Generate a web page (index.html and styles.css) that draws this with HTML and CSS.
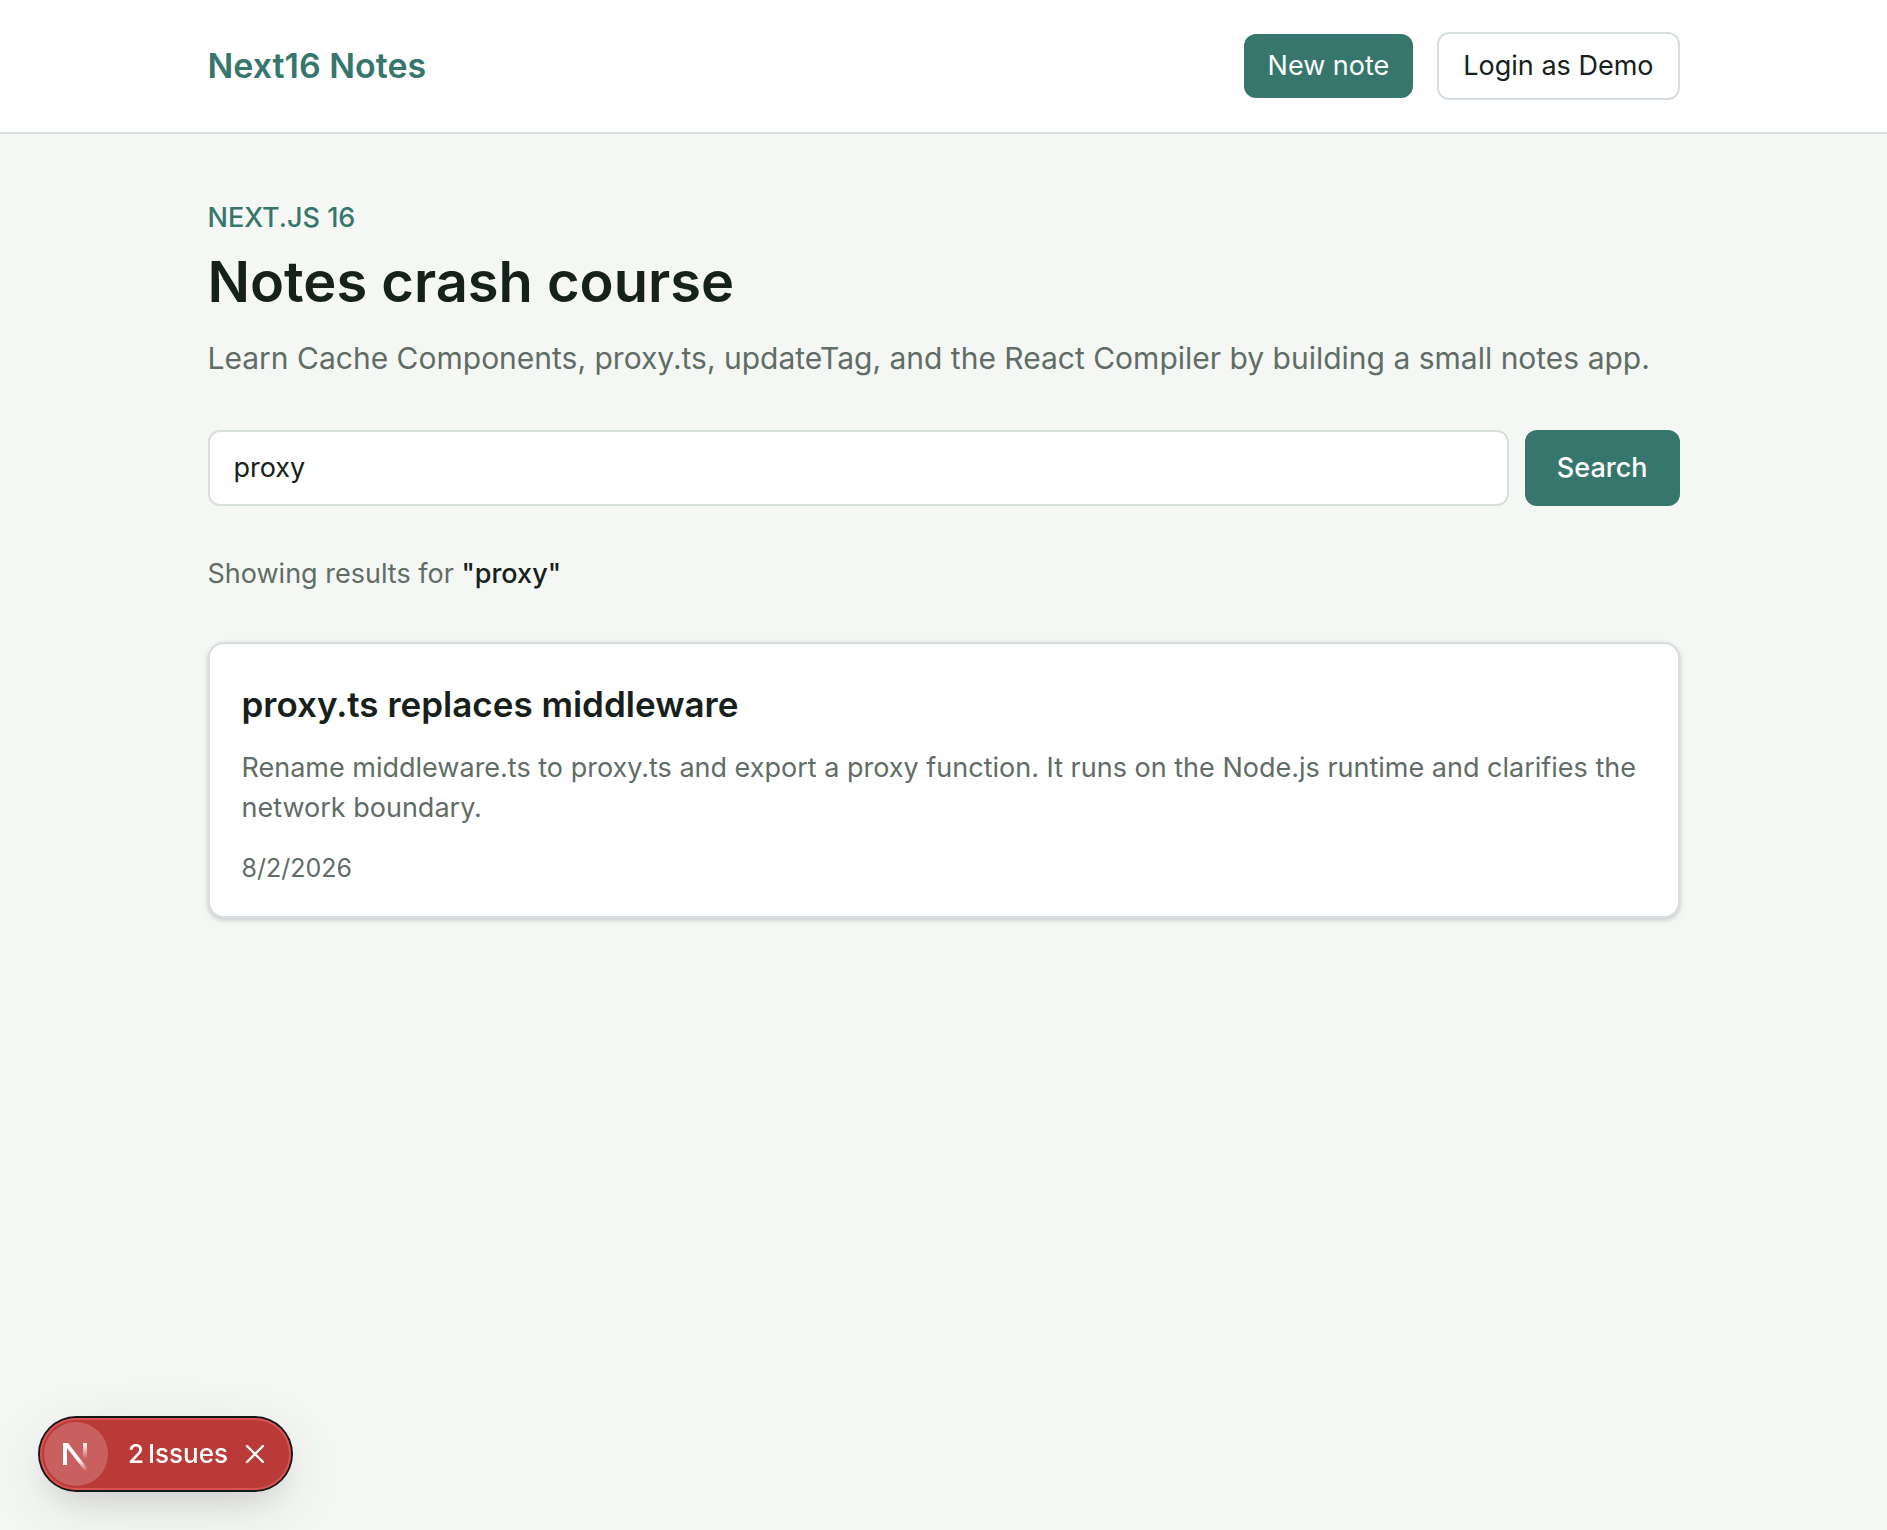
FILE: index.html
```html
<!DOCTYPE html>
<html lang="en">
<head>
  <meta charset="UTF-8">
  <meta name="viewport" content="width=device-width, initial-scale=1">
  <title>Next16 Notes</title>
  <link rel="stylesheet" href="styles.css">
</head>
<body>

<header class="site-header">
  <div class="container header-inner">
    <a class="brand" href="#">Next16 Notes</a>
    <nav class="header-actions">
      <a class="btn btn-primary" href="#">New note</a>
      <button class="btn btn-outline" type="button">Login as Demo</button>
    </nav>
  </div>
</header>

<main class="container main">
  <section class="intro">
    <p class="eyebrow">NEXT.JS 16</p>
    <h1>Notes crash course</h1>
    <p class="lead">Learn Cache Components, proxy.ts, updateTag, and the React Compiler by building a small notes app.</p>
  </section>

  <form class="search">
    <input class="search-input" type="search" name="q" value="proxy" aria-label="Search notes">
    <button class="btn btn-primary btn-search" type="submit">Search</button>
  </form>

  <p class="results">Showing results for <span class="query">"proxy"</span></p>

  <article class="card">
    <h2>proxy.ts replaces middleware</h2>
    <p class="card-text">Rename middleware.ts to proxy.ts and export a proxy function. It runs on the Node.js runtime and clarifies the network boundary.</p>
    <time class="card-date" datetime="2026-08-02">8/2/2026</time>
  </article>
</main>

<!-- Dev tools indicator -->
<div class="dev-badge">
  <button class="dev-logo" type="button" aria-label="Open dev tools">
    <svg width="64" height="64" viewBox="0 0 64 64" fill="none">
      <defs>
        <linearGradient id="fadeDiag" x1="34" y1="38" x2="43" y2="49" gradientUnits="userSpaceOnUse">
          <stop stop-color="#fff"/>
          <stop offset="1" stop-color="#fff" stop-opacity="0"/>
        </linearGradient>
        <linearGradient id="fadeStem" x1="41" y1="21" x2="41" y2="37" gradientUnits="userSpaceOnUse">
          <stop stop-color="#fff"/>
          <stop offset="1" stop-color="#fff" stop-opacity="0"/>
        </linearGradient>
      </defs>
      <path d="M19 21h5L44 47l-3 2L23 26v17h-4z" fill="url(#fadeDiag)"/>
      <path d="M39 21h4v17h-4z" fill="url(#fadeStem)"/>
    </svg>
  </button>
  <button class="dev-issues" type="button"><span>2</span><span>Issues</span></button>
  <button class="dev-close" type="button" aria-label="Close">
    <svg width="20" height="20" viewBox="0 0 20 20" fill="none" stroke="#fff" stroke-width="2.4" stroke-linecap="round">
      <path d="M2 2l16 16M18 2L2 18"/>
    </svg>
  </button>
</div>

</body>
</html>
```

FILE: styles.css
```css
* {
  box-sizing: border-box;
}

body {
  margin: 0;
  min-height: 100vh;
  font-family: Inter, "Liberation Sans", sans-serif;
  font-size: 27px;
  line-height: 40px;
  color: #16211c;
  background: #f5f7f4;
}

h1, h2, p {
  margin: 0;
}

a {
  text-decoration: none;
}

.container {
  max-width: 1536px;
  margin: 0 auto;
  padding: 0 32px;
}

/* Header */
.site-header {
  background: #fff;
  border-bottom: 2px solid #d7dfdb;
}

.header-inner {
  display: flex;
  align-items: center;
  justify-content: space-between;
  padding-top: 32px;
  padding-bottom: 32px;
}

.brand {
  font-size: 34px;
  font-weight: 600;
  color: #37766d;
}

.header-actions {
  display: flex;
  align-items: center;
  gap: 24px;
}

.btn {
  padding: 12px 24px;
  border: none;
  border-radius: 12px;
  font: inherit;
  cursor: pointer;
}

.btn-primary {
  background: #37766d;
  color: #fff;
}

.btn-outline {
  background: #fff;
  border: 2px solid #d7dfdb;
  color: #16211c;
}

/* Main */
.main {
  display: flex;
  flex-direction: column;
  gap: 48px;
  padding-top: 64px;
  padding-bottom: 64px;
}

.eyebrow {
  font-weight: 500;
  color: #37766d;
}

h1 {
  margin-top: 8px;
  font-size: 56px;
  line-height: 72px;
  font-weight: 600;
}

.lead {
  margin-top: 16px;
  font-size: 30px;
  line-height: 48px;
  color: #5f6d66;
}

.search {
  display: flex;
  gap: 16px;
}

.search-input {
  flex: 1;
  min-width: 0;
  padding: 16px 24px;
  border: 2px solid #d7dfdb;
  border-radius: 12px;
  background: #fff;
  font: inherit;
  color: inherit;
  appearance: none;
}

.btn-search {
  padding: 18px 32px;
  font-weight: 500;
}

.results {
  color: #5f6d66;
}

.query {
  font-weight: 500;
  color: #16211c;
}

.card {
  padding: 32px;
  background: #fff;
  border: 2px solid #d7dfdb;
  border-radius: 16px;
  box-shadow: 0 2px 6px rgba(0, 0, 0, 0.1), 0 2px 4px rgba(0, 0, 0, 0.1);
}

h2 {
  font-size: 35px;
  line-height: 56px;
  font-weight: 600;
}

.card-text {
  margin-top: 16px;
  color: #5f6d66;
}

.card-date {
  display: block;
  margin-top: 24px;
  font-size: 25px;
  line-height: 32px;
  color: #5f6d66;
}

/* Dev indicator */
.dev-badge {
  position: fixed;
  left: 40px;
  bottom: 40px;
  display: flex;
  align-items: center;
  height: 72px;
  padding: 4px;
  border-radius: 36px;
  background: #ba3a38;
  box-shadow: 0 0 0 2px #171717, inset 0 0 0 2px #d95254, 0 16px 32px -8px rgba(0, 0, 0, 0.1), 0 16px 60px rgba(0, 0, 0, 0.1);
}

.dev-badge button {
  display: flex;
  align-items: center;
  padding: 0;
  border: none;
  background: none;
  color: #fff;
  font: inherit;
  cursor: pointer;
}

.dev-badge .dev-logo {
  border-radius: 50%;
  background: #c96060;
}

.dev-badge .dev-issues {
  gap: 4px;
  margin-left: 20px;
  font-size: 26px;
  font-weight: 500;
}

.dev-badge .dev-close {
  margin: 0 22px 0 17px;
}
```
